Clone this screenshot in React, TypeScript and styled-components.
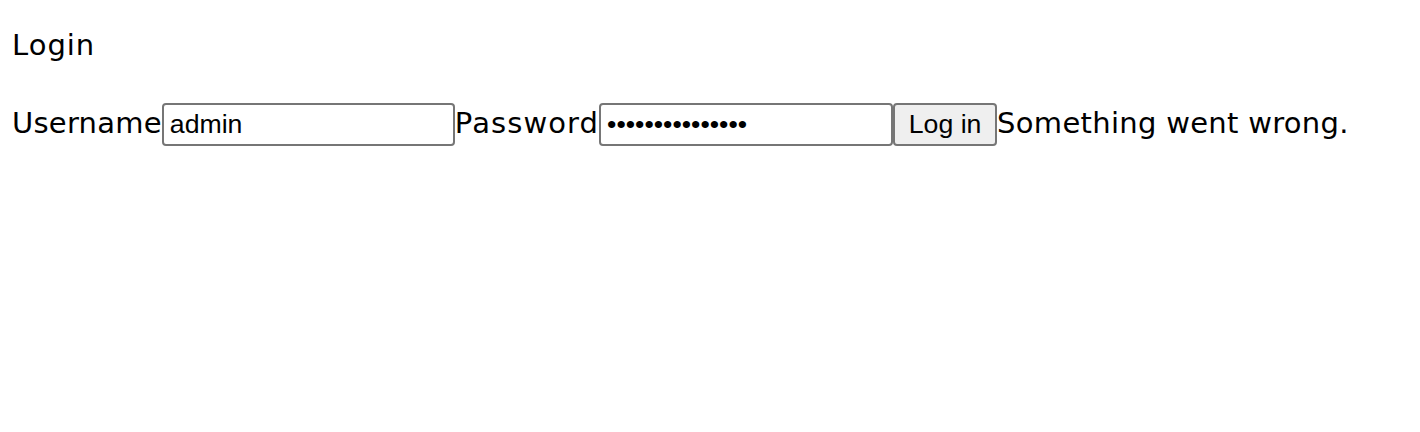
import React, { useState } from 'react';
import styled, { createGlobalStyle } from 'styled-components';

const GlobalStyle = createGlobalStyle`
  html, body {
    margin: 0;
    background: #fff;
  }
  body {
    padding: 28px 12px;
    font-family: 'DejaVu Sans', sans-serif;
    font-size: 29px;
    color: #000;
  }
`;

const Title = styled.div`
  line-height: 34px;
  margin-bottom: 41px;
  letter-spacing: 1px;
`;

const Form = styled.form`
  display: flex;
  align-items: baseline;
  white-space: nowrap;
`;

const Label = styled.label<{ $spacing?: number }>`
  line-height: 34px;
  letter-spacing: ${p => p.$spacing ?? 0}px;
`;

const Field = styled.input<{ $width: number }>`
  box-sizing: border-box;
  width: ${p => p.$width}px;
  height: 43px;
  padding: 0 6px;
  border: 2px solid #767676;
  border-radius: 4px;
  background: #fff;
  font-family: 'Liberation Sans', Arial, sans-serif;
  font-size: 26.67px;
  color: #000;
  outline: none;
`;

const Button = styled.button`
  box-sizing: border-box;
  width: 104px;
  height: 43px;
  padding: 0 12px;
  border: 2px solid #767676;
  border-radius: 4px;
  background: #efefef;
  font-family: 'Liberation Sans', Arial, sans-serif;
  font-size: 26.67px;
  color: #000;
`;

const Message = styled.span`
  line-height: 34px;
  letter-spacing: 0.3px;
`;

export default function App() {
  const [username, setUsername] = useState('admin');
  const [password, setPassword] = useState('123456789012345');

  return (
    <>
      <GlobalStyle />
      <Title>Login</Title>
      <Form onSubmit={e => e.preventDefault()}>
        <Label htmlFor="username" $spacing={0.25}>
          Username
        </Label>
        <Field
          id="username"
          $width={293}
          value={username}
          onChange={e => setUsername(e.target.value)}
        />
        <Label htmlFor="password" $spacing={1.1}>
          Password
        </Label>
        <Field
          id="password"
          type="password"
          $width={294}
          value={password}
          onChange={e => setPassword(e.target.value)}
        />
        <Button type="submit">Log in</Button>
        <Message>Something went wrong.</Message>
      </Form>
    </>
  );
}
